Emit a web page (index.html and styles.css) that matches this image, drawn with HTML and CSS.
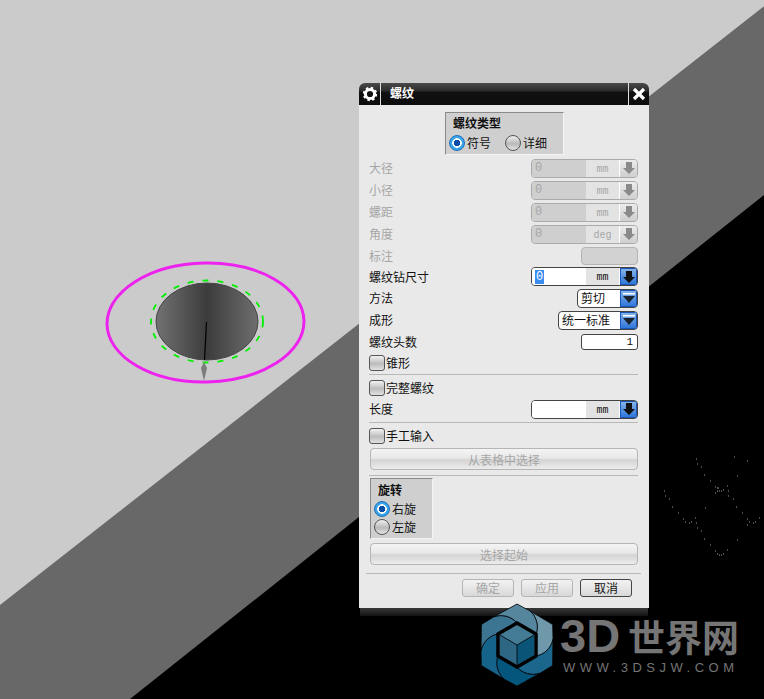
FILE: index.html
```html
<!DOCTYPE html>
<html lang="zh-CN">
<head>
    <meta charset="UTF-8">
    <title>螺纹</title>
    <link rel="stylesheet" href="styles.css">
</head>
<body>

<!-- CAD viewport -->
<svg class="viewport" width="764" height="699" viewBox="0 0 764 699">
    <defs>
        <linearGradient id="holeFill" x1="0" x2="1" y1="0" y2="0">
            <stop offset="0" stop-color="#727272"/>
            <stop offset="0.5" stop-color="#3c3c3c"/>
            <stop offset="1" stop-color="#6e6e6e"/>
        </linearGradient>
    </defs>
    <rect width="764" height="699" fill="#cbcbcb"/>
    <polygon points="0,605 772,0 764,699 0,699" fill="#686868"/>
    <polygon points="130,699 764,195 764,699" fill="#000"/>
    <ellipse cx="205.5" cy="322.5" rx="98.5" ry="59.5" transform="rotate(-1 205.5 322.5)" fill="none" stroke="#ee22ee" stroke-width="3"/>
    <ellipse cx="207" cy="321.5" rx="56" ry="41" fill="none" stroke="#00f000" stroke-width="1.8" stroke-dasharray="6 9"/>
    <ellipse cx="207" cy="321.5" rx="51" ry="38.5" fill="url(#holeFill)" stroke="#444"/>
    <line x1="206.5" y1="322" x2="204.5" y2="360" stroke="#000" stroke-width="1.2"/>
    <polygon points="204,362 207,368 204,381 201,368" fill="#7c7c7c"/>
    <path stroke="#9a9a9a" fill="none" d="M696 459h1M697 464h1M701 467h1M704 475h1M710 481h1M715 487h1M717 488h2M717 491h1M719 491h1M721 491h1M723 490h1M727 486h1M728 491h1M715 493h1M728 496h1M733 499h1M736 507h1M742 513h1M747 519h1M749 522h1M753 523h1M755 522h1M759 518h1M747 525h1M734 457h1M747 461h1M737 476h1M664 491h1M665 496h1M669 499h1M672 507h1M678 513h1M683 519h1M685 522h1M689 523h1M691 522h1M695 518h1M696 523h1M697 528h1M701 531h1M704 539h1M710 545h1M715 551h1M717 554h1M719 555h1M721 555h1M723 554h1M727 550h1M737 540h1M705 508h1"/>
</svg>

<!-- Thread dialog -->
<div class="dialog">
    <div class="titlebar">
        <div class="title-gear">
            <svg width="16" height="16" viewBox="0 0 16 16">
                <circle cx="8" cy="8" r="4.6" fill="none" stroke="#fff" stroke-width="3"/>
                <circle cx="8" cy="8" r="6.2" fill="none" stroke="#fff" stroke-width="2" stroke-dasharray="2.4 2.47"/>
            </svg>
        </div>
        <div class="title-text">螺纹</div>
        <div class="title-close">
            <svg width="14" height="14" viewBox="0 0 14 14">
                <path d="M2 2L12 12M12 2L2 12" stroke="#fff" stroke-width="3.2"/>
            </svg>
        </div>
    </div>

    <div class="dialog-body">
        <div class="group group-type">
            <div class="group-title">螺纹类型</div>
            <div class="radio-line">
                <span class="radio checked"></span><span class="radio-label">符号</span>
                <span class="radio radio-second"></span><span class="radio-label">详细</span>
            </div>
        </div>

        <div class="row row-first disabled">
            <span>大径</span>
            <div class="field"><span class="field-value">0</span><span class="field-unit">mm</span><span class="field-arrow"><svg width="14" height="14" viewBox="0 0 14 14"><path d="M4 1h6v6h3l-6 6-6-6h3z" fill="#8a8a8a"/></svg></span></div>
        </div>
        <div class="row disabled">
            <span>小径</span>
            <div class="field"><span class="field-value">0</span><span class="field-unit">mm</span><span class="field-arrow"><svg width="14" height="14" viewBox="0 0 14 14"><path d="M4 1h6v6h3l-6 6-6-6h3z" fill="#8a8a8a"/></svg></span></div>
        </div>
        <div class="row disabled">
            <span>螺距</span>
            <div class="field"><span class="field-value">0</span><span class="field-unit">mm</span><span class="field-arrow"><svg width="14" height="14" viewBox="0 0 14 14"><path d="M4 1h6v6h3l-6 6-6-6h3z" fill="#8a8a8a"/></svg></span></div>
        </div>
        <div class="row disabled">
            <span>角度</span>
            <div class="field"><span class="field-value">0</span><span class="field-unit">deg</span><span class="field-arrow"><svg width="14" height="14" viewBox="0 0 14 14"><path d="M4 1h6v6h3l-6 6-6-6h3z" fill="#8a8a8a"/></svg></span></div>
        </div>
        <div class="row row-short disabled">
            <span>标注</span>
            <div class="blank-box"></div>
        </div>
        <div class="row row-short">
            <span>螺纹钻尺寸</span>
            <div class="field active"><span class="field-value"><span class="selected">0</span></span><span class="field-unit">mm</span><span class="field-arrow"><svg width="14" height="14" viewBox="0 0 14 14"><path d="M4 1h6v6h3l-6 6-6-6h3z" fill="#111"/></svg></span></div>
        </div>
        <div class="row">
            <span>方法</span>
            <div class="combo combo-small"><span class="combo-text">剪切</span><span class="combo-arrow"><svg width="14" height="12" viewBox="0 0 14 12"><path d="M1 1h12v1.5H1z" fill="#fff"/><path d="M1 4h12l-6 7z" fill="#1a2430"/></svg></span></div>
        </div>
        <div class="row">
            <span>成形</span>
            <div class="combo combo-wide"><span class="combo-text">统一标准</span><span class="combo-arrow"><svg width="14" height="12" viewBox="0 0 14 12"><path d="M1 1h12v1.5H1z" fill="#fff"/><path d="M1 4h12l-6 7z" fill="#1a2430"/></svg></span></div>
        </div>
        <div class="row row-short">
            <span>螺纹头数</span>
            <div class="int-box">1</div>
        </div>
        <div class="row row-short check-row">
            <span class="checkbox"></span><span>锥形</span>
        </div>

        <div class="sep sep-a"></div>

        <div class="row row-short check-row">
            <span class="checkbox"></span><span>完整螺纹</span>
        </div>
        <div class="row">
            <span>长度</span>
            <div class="field active"><span class="field-value"></span><span class="field-unit">mm</span><span class="field-arrow"><svg width="14" height="14" viewBox="0 0 14 14"><path d="M4 1h6v6h3l-6 6-6-6h3z" fill="#111"/></svg></span></div>
        </div>

        <div class="sep sep-b"></div>

        <div class="row row-short check-row">
            <span class="checkbox"></span><span>手工输入</span>
        </div>
        <button class="wide-btn btn-table">从表格中选择</button>

        <div class="sep sep-c"></div>

        <div class="group group-rotate">
            <div class="group-title">旋转</div>
            <div class="radio-line"><span class="radio checked"></span><span class="radio-label">右旋</span></div>
            <div class="radio-line"><span class="radio"></span><span class="radio-label">左旋</span></div>
        </div>
        <button class="wide-btn btn-start">选择起始</button>

        <div class="sep sep-last"></div>

        <div class="footer">
            <button class="foot-btn">确定</button>
            <button class="foot-btn">应用</button>
            <button class="foot-btn default">取消</button>
        </div>
    </div>
    <div class="dialog-bottom"></div>
</div>

<!-- Watermark -->
<div class="watermark">
    <svg class="wm-logo" width="74" height="84" viewBox="-37 -42 74 84">
        <defs>
            <path id="blade" d="M13,-34 L35.5,-20.5 L36,-5.7 C34.25,3.3 26.6,10 19,11 L19,-11 C22,-18 20,-28 13,-34Z" stroke="#000" stroke-width="0.7"/>
        </defs>
        <polygon points="0,-41 35.5,-20.5 35.5,20.5 0,41 -35.5,20.5 -35.5,-20.5" fill="#55869e"/>
        <use href="#blade" fill="#6f98ab"/>
        <use href="#blade" fill="#1b668c" transform="rotate(60)"/>
        <use href="#blade" fill="#05567c" transform="rotate(120)"/>
        <use href="#blade" fill="#15628a" transform="rotate(180)"/>
        <use href="#blade" fill="#3b7591" transform="rotate(240)"/>
        <use href="#blade" fill="#55869e" transform="rotate(300)"/>
        <polygon points="0,-20 17,-10 17,10 0,20 -17,10 -17,-10" fill="#3c7490"/>
        <polygon points="0,-20 17,-10 0,0 -17,-10" fill="#447b95"/>
        <polygon points="0,0 17,-10 17,10 0,20" fill="#0a5478"/>
        <polygon points="0,0 -17,-10 -17,10 0,20" fill="#2e6783"/>
        <path d="M0,0V20M0,0L17,-10M0,0L-17,-10" stroke="#000" stroke-width="0.8"/>
        <polygon points="0,-22 19,-11 19,11 0,22 -19,11 -19,-11" fill="none" stroke="#000" stroke-width="3.5"/>
    </svg>
    <div class="wm-brand">3D</div>
    <div class="wm-cjk">世界网</div>
    <div class="wm-url">WWW.3DSJW.COM</div>
</div>

</body>
</html>
```

FILE: styles.css
```css
html, body {
    margin: 0;
    padding: 0;
}

body {
    position: relative;
    width: 764px;
    height: 699px;
    overflow: hidden;
    background: #000;
    font-family: "Noto Sans CJK SC", "Liberation Sans", sans-serif;
    font-size: 12px;
    color: #111;
}

.viewport {
    position: absolute;
    top: 0;
    left: 0;
    display: block;
}

/* Dialog window */
.dialog {
    position: absolute;
    top: 83px;
    left: 359px;
    width: 290px;
}

.titlebar {
    display: flex;
    align-items: stretch;
    height: 22px;
    background: linear-gradient(#4a4a4a 0, #2c2c2c 35%, #111 42%, #0c0c0c 100%);
    border-radius: 6px 6px 0 0;
    color: #fff;
}

.title-gear {
    display: flex;
    align-items: center;
    justify-content: center;
    width: 21px;
    border-right: 1px solid #ddd;
    box-sizing: content-box;
}

.title-text {
    flex: 1;
    padding-left: 9px;
    font-size: 12px;
    font-weight: 700;
    line-height: 20px;
}

.title-close {
    display: flex;
    align-items: center;
    justify-content: center;
    width: 20px;
    border-left: 1px solid #ddd;
}

.dialog-body {
    display: flex;
    flex-direction: column;
    padding: 7px 11px 11px 10px;
    background: #e9e9e9;
}

.dialog-bottom {
    height: 8px;
    margin: 0 1px;
    background: linear-gradient(#3a3a3a, #222 60%, #111);
}

/* Form rows */
.row {
    display: flex;
    align-items: center;
    justify-content: space-between;
    height: 22px;
    flex: none;
    line-height: 14px;
}

.row-short {
    height: 21px;
}

.row-first {
    margin-top: 2px;
}

.disabled {
    color: #a6a6a6;
}

.check-row {
    justify-content: flex-start;
    gap: 1px;
}

.checkbox {
    width: 14px;
    height: 14px;
    border: 1px solid #555;
    border-radius: 3px;
    background: linear-gradient(#f2f2f2, #bcbcbc 55%, #e2e2e2);
}

/* Number fields with unit and arrow */
.field {
    display: flex;
    width: 107px;
    height: 19px;
    box-sizing: border-box;
    border: 1px solid #aaa;
    border-radius: 4px;
    overflow: hidden;
    font-family: "Liberation Mono", monospace;
    font-size: 10px;
    background: #e3e3e3;
}

.field-value {
    display: flex;
    align-items: center;
    width: 54px;
    padding-left: 3px;
    box-sizing: border-box;
    background: #cfcfcf;
    font-size: 12px;
}

.field-unit {
    flex: 1;
    padding-top: 2px;
    line-height: 15px;
    text-align: center;
}

.field-arrow {
    display: flex;
    align-items: center;
    justify-content: center;
    width: 17px;
    border-left: 1px solid #fff;
    background: linear-gradient(#ececec, #cfcfcf);
}

.field.active {
    border-color: #444;
    color: #111;
}

.field.active .field-value {
    background: #fff;
}

.field.active .field-arrow {
    background: linear-gradient(#8ab6ea, #2a73d8);
    box-shadow: inset 0 0 0 1px #1c55b8;
}

.selected {
    display: inline-block;
    padding: 0 1px;
    background: #3a8cf0;
    color: #fff;
    line-height: 14px;
}

.blank-box {
    width: 57px;
    height: 18px;
    box-sizing: border-box;
    border: 1px solid #b5b5b5;
    border-radius: 4px;
    background: #d2d2d2;
}

.int-box {
    width: 57px;
    height: 16px;
    box-sizing: border-box;
    padding-right: 4px;
    border: 1px solid #444;
    border-radius: 3px;
    background: #fff;
    font-family: "Liberation Mono", monospace;
    font-size: 11px;
    line-height: 14px;
    text-align: right;
}

/* Combo boxes */
.combo {
    display: flex;
    height: 19px;
    box-sizing: border-box;
    border: 1px solid #444;
    border-radius: 4px;
    overflow: hidden;
    background: #fff;
}

.combo-small {
    width: 61px;
}

.combo-wide {
    width: 80px;
}

.combo-text {
    flex: 1;
    padding-left: 3px;
    line-height: 16px;
}

.combo-arrow {
    display: flex;
    align-items: center;
    justify-content: center;
    width: 17px;
    background: linear-gradient(#8ab6ea, #2a73d8);
    box-shadow: inset 0 0 0 1px #1c55b8;
}

/* Radio groups */
.group {
    flex: none;
    box-sizing: border-box;
    border: 1px solid #8e8e8e;
    border-color: #8a8a8a #f4f4f4 #f4f4f4 #8a8a8a;
    background: #cfcfcf;
}

.group-type {
    align-self: flex-start;
    width: 119px;
    height: 43px;
    margin-left: 76px;
    padding: 2px 3px 0;
}

.group-rotate {
    width: 63px;
    height: 61px;
    margin: 2px 0 0 1px;
    padding: 3px 3px 0 3px;
}

.group-title {
    padding-left: 4px;
    font-weight: 700;
    line-height: 15px;
}

.group-rotate .group-title {
    height: 18px;
    padding-left: 4px;
}

.radio-line {
    display: flex;
    align-items: center;
    height: 18px;
    line-height: 14px;
}

.group-type .radio-line {
    height: 20px;
    margin-top: 3px;
}

.radio {
    flex: none;
    width: 14px;
    height: 14px;
    border: 1px solid #555;
    border-radius: 50%;
    background: linear-gradient(#f0f0f0, #b9b9b9 55%, #e4e4e4);
}

.radio.checked {
    border-color: #1c70b8;
    background: radial-gradient(circle, #0b4fa8 0 3px, #fff 3.5px 4.5px, #3aa5ea 5px);
}

.radio-label {
    margin-left: 2px;
}

.radio-second {
    margin-left: 14px;
}

/* Wide buttons */
.wide-btn {
    display: block;
    flex: none;
    width: 268px;
    height: 22px;
    margin-left: 1px;
    padding: 0;
    border: 1px solid #b5b5b5;
    border-radius: 4px;
    background: linear-gradient(#f4f4f4, #e8e8e8 45%, #d4d4d4 55%, #ececec);
    color: #a6a6a6;
    font: inherit;
}

.btn-table {
    margin-top: 2px;
}

.btn-start {
    margin-top: 4px;
}

.sep {
    flex: none;
    height: 1px;
    background: #b8b8b8;
}

.sep-a {
    margin: 1px 0 2px;
}

.sep-b {
    margin: 2px 0 2px;
}

.sep-c {
    margin-top: 5px;
}

.sep-last {
    margin: 8px -3px 0;
}

.footer {
    display: flex;
    justify-content: flex-end;
    gap: 7px;
    margin: 5px 6px 0 0;
}

.foot-btn {
    width: 52px;
    height: 18px;
    padding: 0;
    border: 1px solid #b5b5b5;
    border-radius: 3px;
    background: linear-gradient(#f2f2f2, #e6e6e6 50%, #d8d8d8);
    color: #a6a6a6;
    font: inherit;
    line-height: 14px;
}

.foot-btn.default {
    border-color: #444;
    color: #111;
}

/* Watermark in the corner */
.watermark {
    position: absolute;
    top: 0;
    left: 0;
    pointer-events: none;
}

.wm-logo {
    position: absolute;
    top: 603px;
    left: 480px;
}

.wm-brand {
    position: absolute;
    top: 614px;
    left: 560px;
    font-family: "Liberation Sans", sans-serif;
    font-size: 47px;
    font-weight: 700;
    line-height: 44px;
    color: #757575;
    white-space: nowrap;
}

.wm-cjk {
    position: absolute;
    top: 616px;
    left: 628px;
    font-family: "Noto Sans CJK SC", sans-serif;
    font-size: 37px;
    font-weight: 700;
    line-height: 40px;
    color: #757575;
    white-space: nowrap;
}

.wm-url {
    position: absolute;
    top: 662px;
    left: 563px;
    font-family: "Liberation Sans", sans-serif;
    font-size: 13px;
    letter-spacing: 4.5px;
    line-height: 11px;
    color: #757575;
    white-space: nowrap;
}
```
